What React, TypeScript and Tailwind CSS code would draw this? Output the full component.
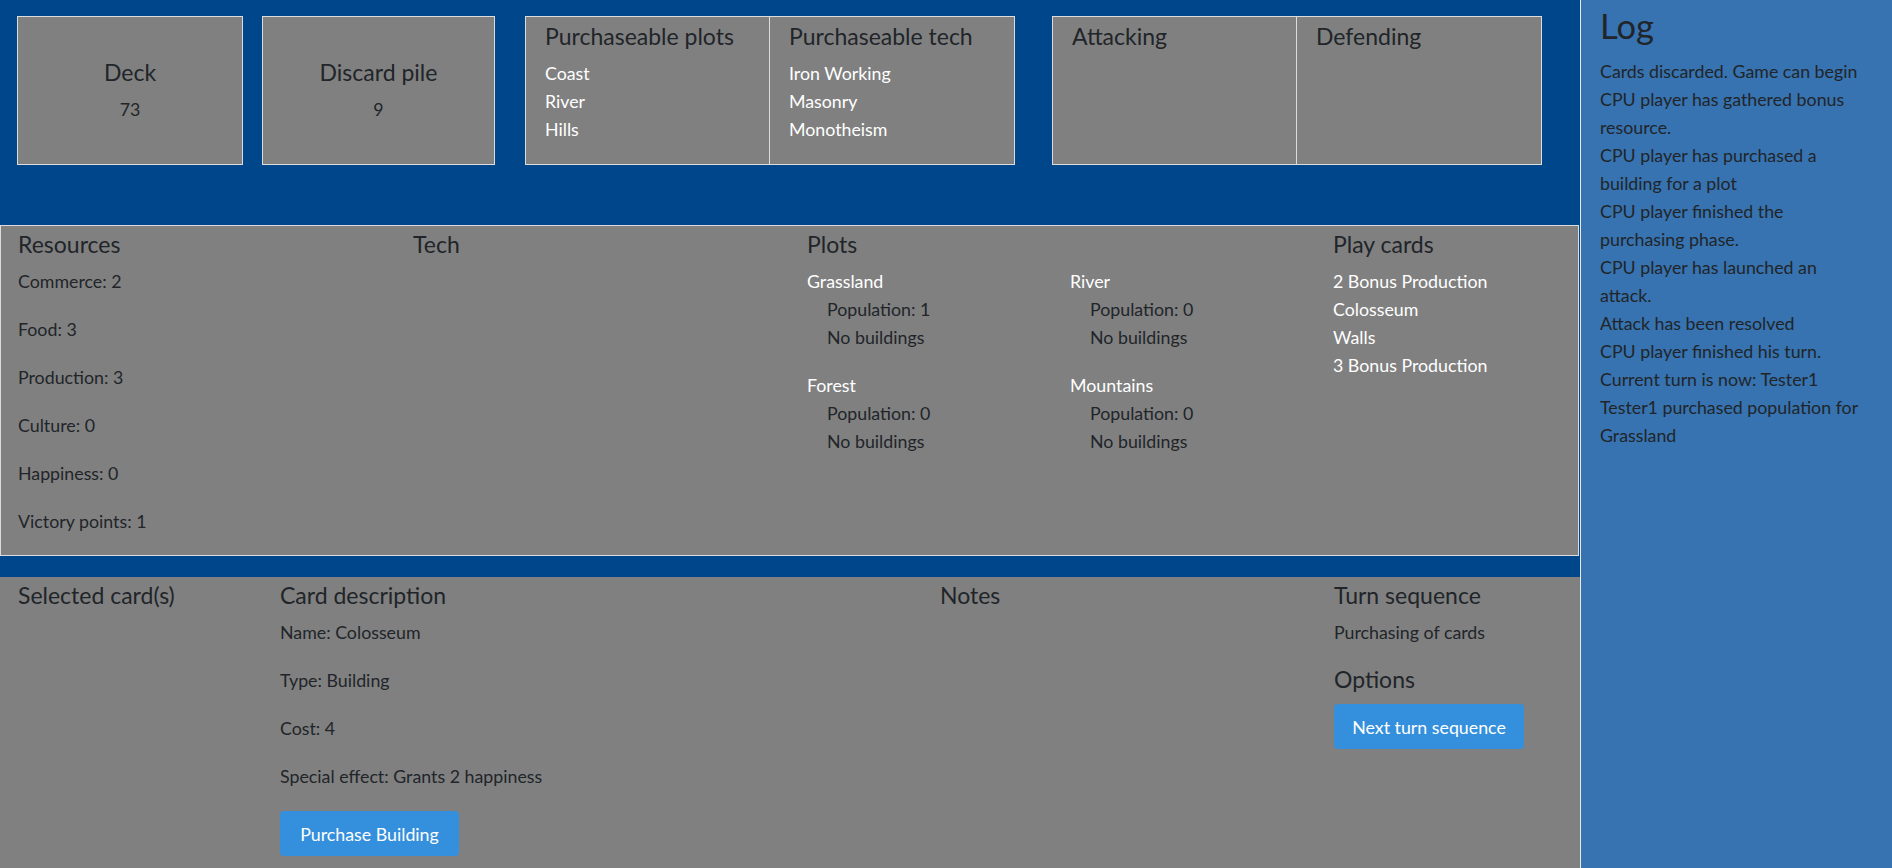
const plots = [
  { name: "Grassland", population: 1 },
  { name: "River", population: 0 },
  { name: "Forest", population: 0 },
  { name: "Mountains", population: 0 },
];

const resources = [
  "Commerce: 2",
  "Food: 3",
  "Production: 3",
  "Culture: 0",
  "Happiness: 0",
  "Victory points: 1",
];

const playCards = ["2 Bonus Production", "Colosseum", "Walls", "3 Bonus Production"];

// each log entry as the lines it breaks into in the narrow column
const log = [
  ["Cards discarded. Game can begin"],
  ["CPU player has gathered bonus", "resource."],
  ["CPU player has purchased a", "building for a plot"],
  ["CPU player finished the", "purchasing phase."],
  ["CPU player has launched an", "attack."],
  ["Attack has been resolved"],
  ["CPU player finished his turn."],
  ["Current turn is now: Tester1"],
  ["Tester1 purchased population for", "Grassland"],
];

const cardDescription = [
  "Name: Colosseum",
  "Type: Building",
  "Cost: 4",
  "Special effect: Grants 2 happiness",
];

function Heading({ children }: { children: React.ReactNode }) {
  return <h5 className="mb-[10px] text-[23px] leading-[26px] font-normal">{children}</h5>;
}

function PileCard({ title, count, width }: { title: string; count: number; width: string }) {
  return (
    <div
      className={`flex h-[149px] ${width} flex-col items-center justify-center border border-[#dcdcdc] bg-[#808080]`}
    >
      <Heading>{title}</Heading>
      <div>{count}</div>
    </div>
  );
}

function SplitCard({
  left,
  right,
  className,
}: {
  left: { title: string; items: string[] };
  right: { title: string; items: string[] };
  className: string;
}) {
  return (
    <div className={`grid h-[149px] w-[490px] grid-cols-2 border border-[#dcdcdc] bg-[#808080] ${className}`}>
      {[left, right].map((half, i) => (
        <div key={half.title} className={`pt-[6px] pl-[19px] ${i === 0 ? "border-r border-[#dcdcdc]" : ""}`}>
          <Heading>{half.title}</Heading>
          {half.items.map((item) => (
            <div key={item} className="text-white">
              {item}
            </div>
          ))}
        </div>
      ))}
    </div>
  );
}

function Button({ children, width }: { children: React.ReactNode; width: string }) {
  return (
    <button
      type="button"
      className={`flex h-[45px] ${width} items-center justify-center rounded-[4px] bg-[#3490dc] text-[17.8px] text-white`}
    >
      {children}
    </button>
  );
}

export default function App() {
  return (
    <div className="flex h-[868px] w-full overflow-hidden bg-white font-['Lato',sans-serif] text-[17.8px] leading-[28px] text-[#212529]">
      <main className="flex w-[1580px] flex-col bg-[#00468b]">
        <section className="flex h-[225px] items-start pt-[16px] pl-[17px]">
          <PileCard title="Deck" count={73} width="w-[226px]" />
          <div className="ml-[19px]">
            <PileCard title="Discard pile" count={9} width="w-[233px]" />
          </div>
          <SplitCard
            className="ml-[30px]"
            left={{ title: "Purchaseable plots", items: ["Coast", "River", "Hills"] }}
            right={{ title: "Purchaseable tech", items: ["Iron Working", "Masonry", "Monotheism"] }}
          />
          <SplitCard
            className="ml-[37px]"
            left={{ title: "Attacking", items: [] }}
            right={{ title: "Defending", items: [] }}
          />
        </section>

        <section className="grid w-[1579px] grid-cols-[395px_394px_526px_1fr] border border-[#dcdcdc] bg-[#808080] pt-[5px] pl-[17px]">
          <div>
            <Heading>Resources</Heading>
            {resources.map((r) => (
              <p key={r} className="mb-[20px]">
                {r}
              </p>
            ))}
          </div>
          <div>
            <Heading>Tech</Heading>
          </div>
          <div>
            <Heading>Plots</Heading>
            <div className="grid grid-cols-[263px_1fr]">
              {plots.map((plot) => (
                <div key={plot.name} className="mb-[20px]">
                  <div className="text-white">{plot.name}</div>
                  <div className="pl-[20px]">Population: {plot.population}</div>
                  <div className="pl-[20px]">No buildings</div>
                </div>
              ))}
            </div>
          </div>
          <div>
            <Heading>Play cards</Heading>
            {playCards.map((c) => (
              <div key={c} className="text-white">
                {c}
              </div>
            ))}
          </div>
        </section>

        <section className="mt-[21px] grid flex-1 grid-cols-[262px_660px_394px_1fr] bg-[#808080] pt-[5px] pl-[18px]">
          <div>
            <Heading>Selected card(s)</Heading>
          </div>
          <div>
            <Heading>Card description</Heading>
            {cardDescription.map((d) => (
              <p key={d} className="mb-[20px]">
                {d}
              </p>
            ))}
            <div className="pt-[1px]">
              <Button width="w-[179px]">Purchase Building</Button>
            </div>
          </div>
          <div>
            <Heading>Notes</Heading>
          </div>
          <div>
            <Heading>Turn sequence</Heading>
            <p className="mb-[20px]">Purchasing of cards</p>
            <Heading>Options</Heading>
            <div className="pt-[2px]">
              <Button width="w-[190px]">Next turn sequence</Button>
            </div>
          </div>
        </section>
      </main>

      <aside className="flex-1 border-l border-[#e8e8e8] bg-[#3673b0] pt-[5px] pr-[10px] pl-[19px]">
        <h2 className="mb-[10px] text-[34.5px] leading-[41.5px] font-normal">Log</h2>
        {log.map((lines) => (
          <div key={lines[0]} className="whitespace-nowrap">
            {lines.map((line) => (
              <div key={line}>{line}</div>
            ))}
          </div>
        ))}
      </aside>
    </div>
  );
}
